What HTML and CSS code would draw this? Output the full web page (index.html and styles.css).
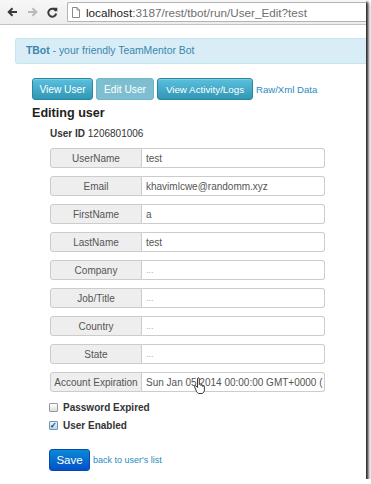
FILE: index.html
```html
<!DOCTYPE html>
<html lang="en">
<head>
    <meta charset="UTF-8">
    <title>TBot - User Edit</title>
    <link rel="stylesheet" href="styles.css">
</head>
<body>

<div class="window">
    <div class="toolbar">
        <svg class="nav-icon" width="11" height="10" viewBox="0 0 11 10">
            <path d="M10 5H2M5.5 1.2L1.7 5l3.8 3.8" fill="none" stroke="#3a3a3a" stroke-width="2"/>
        </svg>
        <svg class="nav-icon" width="11" height="10" viewBox="0 0 11 10">
            <path d="M1 5h8M5.5 1.2L9.3 5 5.5 8.8" fill="none" stroke="#b9b9b9" stroke-width="2"/>
        </svg>
        <svg class="nav-icon" width="11" height="11" viewBox="0 0 11 11">
            <path d="M9 4.2A4 4 0 1 0 9.2 6.5" fill="none" stroke="#3a3a3a" stroke-width="2"/>
            <path d="M6.3 0.8h4v4z" fill="#3a3a3a"/>
        </svg>
        <div class="url">
            <svg class="page-icon" width="8" height="11" viewBox="0 0 8 11">
                <path d="M0.5 0.5h4.5l2.5 2.5v7.5h-7z" fill="#fff" stroke="#8a8a8a"/>
                <path d="M5 0.5v2.5h2.5" fill="none" stroke="#8a8a8a"/>
            </svg>
            <span class="host">localhost</span><span class="path">:3187/rest/tbot/run/User_Edit?test</span>
        </div>
    </div>

    <div class="page">
        <div class="alert"><b>TBot</b> - your friendly TeamMentor Bot</div>

        <div class="content">
            <div class="tabs">
                <button class="btn btn-view">View User</button>
                <button class="btn btn-edit disabled">Edit User</button>
                <button class="btn btn-logs">View Activity/Logs</button>
                <a class="link" href="#">Raw/Xml Data</a>
            </div>

            <h3>Editing user</h3>

            <div class="form">
                <p class="user-id"><b>User ID</b> 1206801006</p>

                <div class="rows">
                    <div class="row"><span class="addon">UserName</span><span class="field">test</span></div>
                    <div class="row"><span class="addon">Email</span><span class="field">khavimlcwe@randomm.xyz</span></div>
                    <div class="row"><span class="addon">FirstName</span><span class="field">a</span></div>
                    <div class="row"><span class="addon">LastName</span><span class="field">test</span></div>
                    <div class="row"><span class="addon">Company</span><span class="field empty">...</span></div>
                    <div class="row"><span class="addon">Job/Title</span><span class="field empty">...</span></div>
                    <div class="row"><span class="addon">Country</span><span class="field empty">...</span></div>
                    <div class="row"><span class="addon">State</span><span class="field empty">...</span></div>
                    <div class="row expiry">
                        <span class="addon">Account Expiration</span><span class="field">Sun Jan 05 2014 00:00:00 GMT+0000 (</span>
                        <svg class="cursor" width="12" height="17" viewBox="0 0 12 17">
                            <path d="M3.5 1.5c0-1 1.8-1 1.8 0v6c0-1 1.7-1 1.7 0v1c0-1 1.7-1 1.7 0v1c0-1 1.7-1 1.7 0v3.5c0 1.5-1 3.5-2.5 3.5H5c-1 0-1.8-1-2.5-2L0.7 10c-0.6-1 0.6-1.8 1.4-1l1.4 1.6z" fill="#fff" stroke="#222" stroke-width="0.9"/>
                        </svg>
                    </div>
                </div>

                <label class="check"><span class="box"></span>Password Expired</label>
                <label class="check"><span class="box checked">&#10003;</span>User Enabled</label>

                <div class="actions">
                    <button class="save">Save</button>
                    <a class="back" href="#">back to user's list</a>
                </div>
            </div>
        </div>
    </div>
</div>

</body>
</html>
```

FILE: styles.css
```css
* {
    margin: 0;
    padding: 0;
    box-sizing: border-box;
}

body {
    font-family: 'Liberation Sans', Arial, sans-serif;
    background: #fff;
    color: #333;
}

.window {
    width: 366px;
    height: 479px;
    background: #fff;
    overflow: hidden;
    box-shadow: 2px 2px 2px rgba(0, 0, 0, 0.75), 3px 3px 4px rgba(0, 0, 0, 0.35);
}

/* browser chrome */

.toolbar {
    height: 25px;
    display: flex;
    align-items: center;
    padding-left: 7px;
    background: linear-gradient(#f7f7f7, #ededed);
    border-bottom: 1px solid #c4c4c4;
}

.nav-icon {
    margin-right: 9px;
}

.url {
    flex: 1;
    height: 20px;
    display: flex;
    align-items: center;
    padding-left: 4px;
    background: #fff;
    border: 1px solid #b3b3b3;
    border-right: none;
    border-radius: 2px 0 0 2px;
    font-size: 11.7px;
    white-space: nowrap;
}

.page-icon {
    margin-right: 6px;
}

.host {
    color: #222;
}

.path {
    color: #6f6f6f;
}

/* page */

.page {
    padding: 13px 0 0 15px;
    font-size: 10px;
}

.alert {
    height: 26px;
    line-height: 24px;
    padding-left: 10px;
    background: #d9edf7;
    border: 1px solid #c4e6f1;
    border-right: none;
    border-radius: 3px 0 0 3px;
    color: #3a87ad;
    font-size: 10.4px;
}

.content {
    padding-left: 17px;
}

.tabs {
    display: flex;
    align-items: center;
    gap: 3px;
    margin-top: 14px;
}

.btn {
    height: 22px;
    padding: 0;
    font-family: inherit;
    font-size: 10.2px;
    color: #fff;
    text-align: center;
    background: linear-gradient(#5bc0de, #2f96b4);
    border: 1px solid #2a87a3;
    border-radius: 3px;
    box-shadow: inset 0 1px 0 rgba(255, 255, 255, 0.2);
}

.btn-view {
    width: 61px;
}

.btn-edit {
    width: 58px;
}

.btn-logs {
    width: 96px;
    font-size: 9.8px;
}

.btn.disabled {
    background: #7dbfd1;
    border-color: #72b4c6;
    box-shadow: none;
}

.link {
    color: #2a8ac0;
    text-decoration: none;
    font-size: 9.6px;
}

h3 {
    margin-top: 5px;
    font-size: 12.6px;
    line-height: 16px;
    color: #222;
}

.form {
    padding-left: 18px;
}

.user-id {
    margin-top: 6px;
    line-height: 14px;
    color: #333;
}

.rows {
    display: flex;
    flex-direction: column;
    gap: 8px;
    margin-top: 7px;
    width: 275px;
}

.row {
    display: flex;
    height: 20px;
}

.expiry {
    position: relative;
}

.addon {
    width: 92px;
    flex-shrink: 0;
    display: flex;
    align-items: center;
    justify-content: center;
    background: #eee;
    color: #555;
    border: 1px solid #ccc;
    border-radius: 3px 0 0 3px;
    white-space: nowrap;
}

.field {
    flex: 1;
    display: flex;
    align-items: center;
    padding-left: 4px;
    color: #555;
    border: 1px solid #ccc;
    border-left: none;
    border-radius: 0 3px 3px 0;
    white-space: nowrap;
    overflow: hidden;
}

.field.empty {
    color: #aaa;
    font-size: 9px;
}

.cursor {
    position: absolute;
    left: 144px;
    top: 5px;
}

.check {
    display: flex;
    align-items: center;
    height: 18px;
    font-weight: bold;
    color: #333;
}

.check:first-of-type {
    margin-top: 6px;
}

.box {
    width: 9px;
    height: 9px;
    margin-left: -1px;
    margin-right: 5px;
    border: 1px solid #999;
    border-radius: 1px;
    background: linear-gradient(#fff, #ddd);
    font-size: 8px;
    line-height: 7px;
    text-align: center;
    color: #234;
}

.box.checked {
    background: linear-gradient(#e6f2fb, #b9d7ee);
    border-color: #6d95b5;
}

.actions {
    display: flex;
    align-items: center;
    margin-top: 15px;
    gap: 3px;
}

.save {
    width: 41px;
    height: 22px;
    margin-left: -1px;
    font-family: inherit;
    font-size: 11.5px;
    color: #fff;
    background: linear-gradient(#0a8ad6, #0450c8);
    border: 1px solid #0448b0;
    border-radius: 3px;
}

.back {
    font-size: 9px;
    color: #2a8ac0;
    text-decoration: none;
}
```
